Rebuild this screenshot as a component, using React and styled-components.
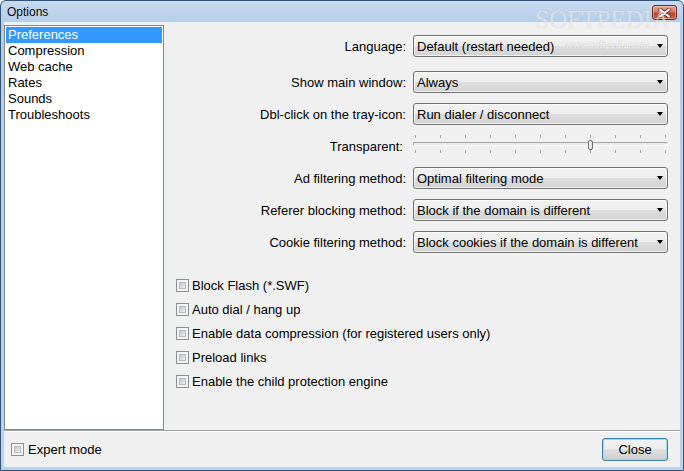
import React from 'react'
import styled, { createGlobalStyle, css } from 'styled-components'

const GlobalStyle = createGlobalStyle`
  html, body {
    margin: 0;
    padding: 0;
  }
  body {
    width: 684px;
    height: 471px;
    overflow: hidden;
    font-family: "Liberation Sans", Arial, sans-serif;
    font-size: 13px;
    color: #000;
  }
`

const Window = styled.div`
  position: relative;
  width: 684px;
  height: 471px;
  box-sizing: border-box;
  display: flex;
  flex-direction: column;
  padding: 0 3px 3px;
  border: 1px solid #34557a;
  border-radius: 6px 6px 0 0;
  background: linear-gradient(#c6daef 0, #b5cde8 22px, #bad2ea 100%);
  overflow: hidden;
`

const TitleBar = styled.div`
  height: 21px;
  display: flex;
  justify-content: space-between;
  align-items: flex-start;
  padding: 0 3px;
`

const Title = styled.span`
  font-size: 12px;
  line-height: 22px;
  color: #0a0a0a;
`

const CloseX = styled.button`
  margin-top: 4px;
  width: 25px;
  height: 15px;
  padding: 0;
  border: 1px solid #6d2a21;
  border-radius: 3px;
  background: linear-gradient(#e5a595 0, #d27a66 45%, #b9442c 55%, #c8644a 100%);
  box-shadow: inset 0 0 0 1px rgba(255, 255, 255, 0.35);
  display: flex;
  align-items: center;
  justify-content: center;
`

const Watermark = styled.div`
  position: absolute;
  z-index: 3;
  right: 13px;
  top: 5px;
  font-family: "Liberation Serif", "Times New Roman", serif;
  font-size: 25px;
  color: rgba(255, 255, 255, 0.5);
  text-shadow: 0 0 1px rgba(150, 150, 150, 0.35);
  pointer-events: none;
`

const WatermarkUrl = styled.div`
  position: absolute;
  z-index: 3;
  right: 34px;
  top: 38px;
  font-family: "Liberation Serif", "Times New Roman", serif;
  font-size: 10.5px;
  color: rgba(255, 255, 255, 0.9);
  text-shadow: 0 0 1px rgba(120, 120, 120, 0.5);
  pointer-events: none;
`

const Client = styled.div`
  flex: 1;
  display: flex;
  flex-direction: column;
  background: #f0f0f0;
`

const Main = styled.div`
  height: 408px;
  display: flex;
`

const List = styled.ul`
  width: 160px;
  box-sizing: border-box;
  margin: 3px 0 0;
  padding: 1px;
  list-style: none;
  background: #fff;
  border: 1px solid #828790;
`

const Item = styled.li`
  height: 16px;
  line-height: 16px;
  padding-left: 2px;
  ${p =>
    p.selected &&
    css`
      background: #3399ff;
      color: #fff;
    `};
`

const Panel = styled.div`
  flex: 1;
  padding: 13px 12px 0 0;
`

const Form = styled.div`
  display: flex;
  flex-direction: column;
  gap: 10px;
`

const Row = styled.div`
  height: 22px;
  display: flex;
  align-items: center;
  ${p => p.spaced && 'margin-bottom: 4px;'}
`

const Label = styled.label`
  flex: 1;
  text-align: right;
  margin-right: ${p => (p.tight ? 10 : 7)}px;
  white-space: nowrap;
`

const Select = styled.div`
  width: 255px;
  height: 22px;
  box-sizing: border-box;
  display: flex;
  align-items: center;
  justify-content: space-between;
  padding: 0 4px 0 3px;
  border: 1px solid #707070;
  border-radius: 3px;
  background: linear-gradient(#f4f4f4 0, #ececec 50%, #dedede 50%, #d2d2d2 100%);
  box-shadow: inset 0 0 0 1px rgba(255, 255, 255, 0.7);
  white-space: nowrap;
`

const Arrow = styled.span`
  width: 0;
  height: 0;
  border-left: 3.5px solid transparent;
  border-right: 3.5px solid transparent;
  border-top: 4px solid #000;
`

const Slider = styled.div`
  position: relative;
  width: 255px;
  height: 22px;
  display: flex;
  flex-direction: column;
`

const Ticks = styled.div`
  height: 3px;
  display: flex;
  justify-content: space-between;
  padding: 0 2px;
  margin-bottom: 4px;
`

const Tick = styled.span`
  width: 1px;
  height: 3px;
  background: #a8a8a8;
`

const Track = styled.div`
  height: 5px;
  box-sizing: border-box;
  margin-bottom: 4px;
  background: #e7eaea;
  border: 1px solid #fff;
  border-top-color: #a6a6a6;
  border-left-color: #a6a6a6;
`

const Thumb = styled.span`
  position: absolute;
  top: 5px;
  width: 5px;
  height: 10px;
  box-sizing: border-box;
  border: 1px solid #6f6f6f;
  border-radius: 2px;
  background: linear-gradient(90deg, #fdfdfd, #dcdcdc);
`

const Checks = styled.div`
  margin-top: 20px;
  padding-left: 12px;
  display: flex;
  flex-direction: column;
`

const CheckRow = styled.label`
  height: 24px;
  display: flex;
  align-items: center;
  gap: ${p => (p.wide ? 4 : 3)}px;
`

const Box = styled.span`
  width: 13px;
  height: 13px;
  box-sizing: border-box;
  border: 1px solid #8e8f8f;
  background: #f4f4f4;
  padding: 2px;
  &::after {
    content: '';
    display: block;
    width: 100%;
    height: 100%;
    background: linear-gradient(135deg, #c3c7cc, #eceded);
    border: 1px solid #b7bcc2;
    box-sizing: border-box;
  }
`

const Footer = styled.div`
  height: 35px;
  display: flex;
  align-items: center;
  justify-content: space-between;
  padding: 1px 12px 0 7px;
  border-top: 1px solid #a0a0a0;
  box-shadow: inset 0 1px 0 #fff;
`

const Button = styled.button`
  width: 66px;
  height: 23px;
  font-family: inherit;
  font-size: 13px;
  border: 1px solid #3c7fb1;
  border-radius: 3px;
  background: linear-gradient(#f2f2f2 0, #ebebeb 50%, #dddddd 50%, #cfcfcf 100%);
  box-shadow: inset 0 0 0 1px #9ad7f5;
  color: #000;
  padding: 0;
`

const pages = ['Preferences', 'Compression', 'Web cache', 'Rates', 'Sounds', 'Troubleshoots']

const fields = [
  { label: 'Language:', value: 'Default (restart needed)', spaced: true },
  { label: 'Show main window:', value: 'Always' },
  { label: 'Dbl-click on the tray-icon:', value: 'Run dialer / disconnect' },
  { label: 'Transparent:', slider: 7 },
  { label: 'Ad filtering method:', value: 'Optimal filtering mode' },
  { label: 'Referer blocking method:', value: 'Block if the domain is different' },
  { label: 'Cookie filtering method:', value: 'Block cookies if the domain is different' }
]

const options = [
  'Block Flash (*.SWF)',
  'Auto dial / hang up',
  'Enable data compression (for registered users only)',
  'Preload links',
  'Enable the child protection engine'
]

const TrackBar = ({ value }) => (
  <Slider>
    <Ticks>
      {Array.from({ length: 11 }, (_, i) => (
        <Tick key={i} />
      ))}
    </Ticks>
    <Track />
    <Ticks>
      {Array.from({ length: 11 }, (_, i) => (
        <Tick key={i} />
      ))}
    </Ticks>
    <Thumb style={{ left: value * 25 }} />
  </Slider>
)

export default function App() {
  return (
    <Window>
      <GlobalStyle />
      <TitleBar>
        <Title>Options</Title>
        <CloseX aria-label="Close">
          <svg width="13" height="10" viewBox="0 0 13 10">
            <path d="M2 1.5 L11 8.5 M11 1.5 L2 8.5" stroke="#6b2418" strokeWidth="3.6" strokeLinecap="round" />
            <path d="M2 1.5 L11 8.5 M11 1.5 L2 8.5" stroke="#fff" strokeWidth="2.2" strokeLinecap="round" />
          </svg>
        </CloseX>
      </TitleBar>
      <Watermark>SOFTPEDIA</Watermark>
      <WatermarkUrl>www.softpedia.com</WatermarkUrl>
      <Client>
        <Main>
          <List>
            {pages.map((p, i) => (
              <Item key={p} selected={i === 0}>
                {p}
              </Item>
            ))}
          </List>
          <Panel>
            <Form>
              {fields.map(f => (
                <Row key={f.label} spaced={f.spaced}>
                  <Label tight={f.slider !== undefined}>{f.label}</Label>
                  {f.slider !== undefined ? (
                    <TrackBar value={f.slider} />
                  ) : (
                    <Select>
                      <span>{f.value}</span>
                      <Arrow />
                    </Select>
                  )}
                </Row>
              ))}
            </Form>
            <Checks>
              {options.map(o => (
                <CheckRow key={o}>
                  <Box />
                  {o}
                </CheckRow>
              ))}
            </Checks>
          </Panel>
        </Main>
        <Footer>
          <CheckRow wide>
            <Box />
            Expert mode
          </CheckRow>
          <Button>Close</Button>
        </Footer>
      </Client>
    </Window>
  )
}
